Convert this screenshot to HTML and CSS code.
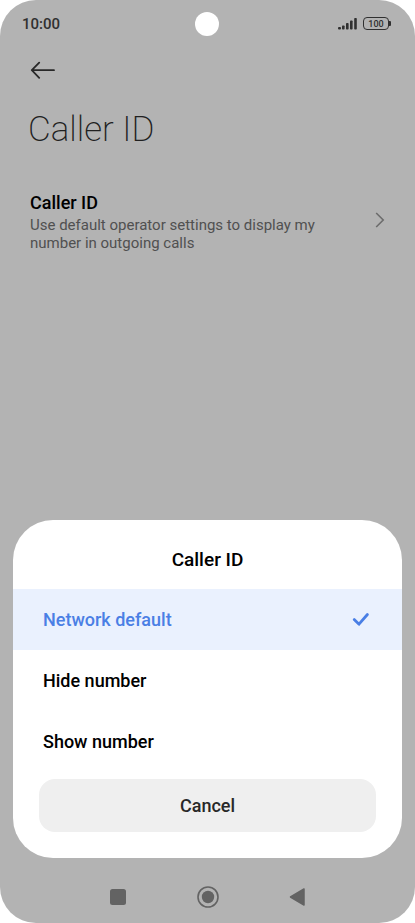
FILE: index.html
```html
<!DOCTYPE html>
<html lang="en">
<head>
<meta charset="utf-8">
<meta name="viewport" content="width=device-width, initial-scale=1">
<title>Caller ID</title>
<link rel="stylesheet" href="styles.css">
</head>
<body>
<div class="screen">
  <header class="status">
    <span class="time">10:00</span>
    <span class="camera"></span>
    <span class="indicators">
      <svg width="20" height="14" viewBox="0 0 20 14" fill="#303030" aria-hidden="true">
        <rect x="0" y="10" width="3" height="2.5" rx="1"/>
        <rect x="4" y="8.5" width="2.6" height="4" rx=".8"/>
        <rect x="8" y="6" width="2.6" height="6.500" rx=".8"/>
        <rect x="12" y="3.500" width="2.600" height="9" rx=".8"/>
        <rect x="16.200" y="1" width="2.600" height="11.500" rx=".8"/>
      </svg>
      <span class="battery">100</span>
    </span>
  </header>

  <main class="page">
    <button class="back" type="button" aria-label="Back">
      <svg width="26" height="18" viewBox="0 0 26 18" fill="none" stroke="#282828" stroke-width="1.800" stroke-linecap="round" stroke-linejoin="round"><path d="M24 9.200H2M9.200 1.600L1.800 9.200L9.200 16.800"/></svg>
    </button>
    <h1 class="title">Caller ID</h1>
    <a class="setting" href="#sheet">
      <span class="setting-text">
        <span class="setting-name">Caller ID</span>
        <span class="setting-note">Use default operator settings to display my number in outgoing calls</span>
      </span>
      <svg width="10" height="18" viewBox="0 0 10 18" fill="none" stroke="#6c6c6c" stroke-width="1.600"><path d="M1.200 1L8.200 8L1.200 15"/></svg>
    </a>
  </main>

  <form class="sheet" id="sheet">
    <h2 class="sheet-title">Caller ID</h2>
    <label class="option">
      <span>Network default</span>
      <input type="radio" name="caller" checked>
      <svg class="check" width="18" height="15" viewBox="0 0 18 15" fill="none" stroke="#4a7fe5" stroke-width="2.800" stroke-linecap="round" stroke-linejoin="round"><path d="M2.200 7.600L7 12.200L15.400 2.500"/></svg>
    </label>
    <label class="option">
      <span>Hide number</span>
      <input type="radio" name="caller">
    </label>
    <label class="option">
      <span>Show number</span>
      <input type="radio" name="caller">
    </label>
    <button class="cancel" type="button">Cancel</button>
  </form>

  <nav class="navbar">
    <button type="button" aria-label="Recent apps"><svg width="24" height="24" viewBox="0 0 24 24"><rect x="4" y="4" width="16" height="16" rx="2.500" fill="#636363"/></svg></button>
    <button type="button" aria-label="Home"><svg width="24" height="24" viewBox="0 0 24 24"><circle cx="12" cy="12" r="10" fill="none" stroke="#636363" stroke-width="1.600"/><circle cx="12" cy="12" r="6.200" fill="#636363"/></svg></button>
    <button type="button" aria-label="Go back"><svg width="24" height="24" viewBox="0 0 24 24"><path d="M4.500 12L18 4V20Z" fill="#636363" stroke="#636363" stroke-width="1.500" stroke-linejoin="round"/></svg></button>
  </nav>
</div>
</body>
</html>
```
FILE: styles.css
```css
* {
  box-sizing: border-box;
}

body {
  margin: 0;
  background: #fff;
  color: #000;
  font-family: Roboto, "Liberation Sans", sans-serif;
}

button {
  padding: 0;
  border: 0;
  background: none;
  font: inherit;
}

svg {
  display: block;
  flex: none;
}

.screen {
  display: flex;
  flex-direction: column;
  min-height: 100vh;
  border-radius: 36px;
  background: #b3b3b3;
}

.status {
  display: grid;
  grid-template-columns: 1fr auto 1fr;
  align-items: center;
  height: 48px;
  padding: 0 24px 0 22px;
}

.time {
  color: #303030;
  font-size: 15px;
  font-weight: 500;
  line-height: 20px;
}

.camera {
  width: 24px;
  height: 24px;
  border-radius: 50%;
  background: #fff;
}

.indicators {
  display: flex;
  align-items: center;
  justify-content: flex-end;
  gap: 5px;
  padding-bottom: 1px;
}

.battery {
  position: relative;
  width: 26px;
  height: 13px;
  margin-right: 2px;
  border: 1px solid #303030;
  border-radius: 4px;
  color: #303030;
  font-size: 9px;
  font-weight: 500;
  line-height: 12px;
  text-align: center;
}

.battery::after {
  content: "";
  position: absolute;
  top: 3px;
  right: -3px;
  width: 2px;
  height: 5px;
  border-radius: 0 1px 1px 0;
  background: #303030;
}

.page {
  flex: 1;
  padding: 13px 30px 0;
}

.back {
  display: block;
}

.title {
  margin: 28px 0 0 -2px;
  color: #202020;
  font-size: 35px;
  font-weight: 200;
  line-height: 46px;
}

.setting {
  display: flex;
  align-items: center;
  justify-content: space-between;
  margin-top: 37px;
  color: inherit;
  text-decoration: none;
}

.setting-text {
  max-width: 300px;
}

.setting-name,
.setting-note {
  display: block;
}

.setting-name {
  font-size: 18px;
  font-weight: 500;
  line-height: 26px;
}

.setting-note {
  color: #505050;
  font-size: 15px;
  line-height: 18px;
}

.sheet {
  margin: 0 13px;
  padding-bottom: 26px;
  overflow: hidden;
  border-radius: 40px;
  background: #fff;
  font-size: 18px;
  font-weight: 500;
}

.sheet-title {
  margin: 0;
  padding: 28px 0 17px;
  font-size: 19px;
  font-weight: 500;
  line-height: 24px;
  text-align: center;
}

.option {
  display: flex;
  align-items: center;
  height: 61px;
  padding: 0 32px 0 30px;
}

.option:has(:checked) {
  background: #eaf1fe;
  color: #4a7fe5;
}

.option input {
  appearance: none;
  width: 0;
  height: 0;
  margin: 0 0 0 auto;
}

.cancel {
  display: block;
  width: calc(100% - 52px);
  height: 53px;
  margin: 7px 26px 0;
  border-radius: 16px;
  background: #efefef;
  color: #282828;
}

.navbar {
  display: flex;
  justify-content: center;
  gap: 66px;
  padding: 27px 0 14px;
}
```
